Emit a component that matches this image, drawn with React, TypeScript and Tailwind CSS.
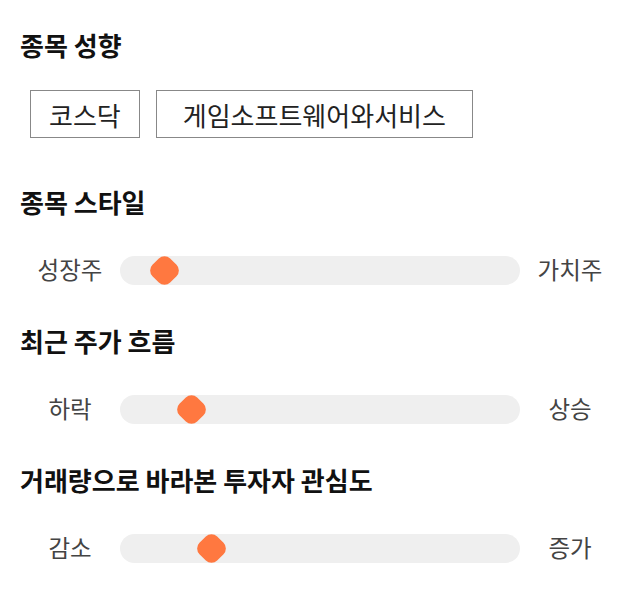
import React from "react";

const sliders = [
  { title: "종목 스타일", left: "성장주", right: "가치주", pos: 30 },
  { title: "최근 주가 흐름", left: "하락", right: "상승", pos: 57 },
  { title: "거래량으로 바라본 투자자 관심도", left: "감소", right: "증가", pos: 77 },
];

function Slider({ left, right, pos }: { left: string; right: string; pos: number }) {
  return (
    <div className="flex items-center h-[30px]">
      <div className="w-[100px] text-center text-[23.5px] text-[#444]">{left}</div>
      <div className="relative flex-1 h-[29px] rounded-full bg-[#efefef]">
        <div
          className="absolute top-[2px] w-[25px] h-[25px] rotate-45 rounded-[8px] bg-[#ff7840]"
          style={{ left: pos + 2 }}
        />
      </div>
      <div className="w-[100px] text-center text-[23.5px] text-[#444]">{right}</div>
    </div>
  );
}

export default function App() {
  return (
    <div
      className="w-[640px] h-[606px] bg-white px-[20px] pt-[28px]"
      style={{ fontFamily: '"Noto Sans CJK KR", "Noto Sans", sans-serif' }}
    >
      <h2 className="h-[34px] leading-[34px] text-[26px] font-bold text-[#111]">종목 성향</h2>
      <div className="flex gap-[16px] ml-[10px] mt-[28px]">
        <div className="h-[48px] px-[18px] flex items-center border border-[#888] text-[26px] text-[#222]">
          코스닥
        </div>
        <div className="h-[48px] px-[26px] flex items-center border border-[#888] text-[26px] text-[#222]">
          게임소프트웨어와서비스
        </div>
      </div>
      {sliders.map((s, i) => (
        <div key={s.title} className={i === 0 ? "mt-[47px]" : "mt-[39px]"}>
          <h2 className="h-[34px] leading-[34px] text-[26px] font-bold text-[#111]">{s.title}</h2>
          <div className="mt-[36px]">
            <Slider left={s.left} right={s.right} pos={s.pos} />
          </div>
        </div>
      ))}
    </div>
  );
}
